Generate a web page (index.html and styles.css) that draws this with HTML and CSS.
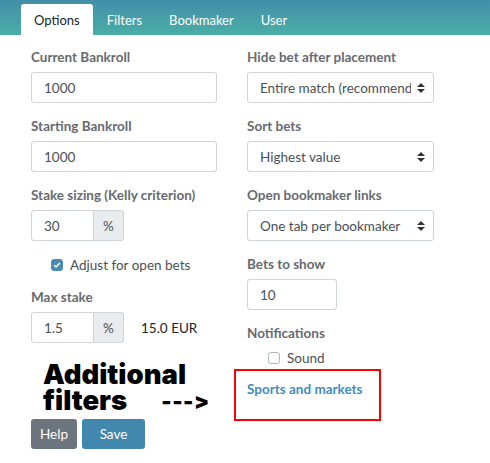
FILE: index.html
```html
<!DOCTYPE html>
<html>
<head>
<meta charset="utf-8">
<link rel="stylesheet" href="styles.css">
</head>
<body>
<div class="topbar">
  <div class="tab active">Options</div>
  <div class="tab">Filters</div>
  <div class="tab">Bookmaker</div>
  <div class="tab">User</div>
</div>
<div class="content">
  <div class="grid">
    <div class="col">
      <div class="group">
        <div class="label">Current Bankroll</div>
        <div class="input">1000</div>
      </div>
      <div class="group">
        <div class="label">Starting Bankroll</div>
        <div class="input">1000</div>
      </div>
      <div class="group">
        <div class="label">Stake sizing (Kelly criterion)</div>
        <div class="igroup">
          <div class="input short">30</div>
          <div class="addon">%</div>
        </div>
      </div>
      <div class="check checked-row">
        <span class="box checked"><svg width="8" height="8" viewBox="0 0 8 8"><path d="M1.2 4.2 L3.1 6 L6.8 2" fill="none" stroke="#fff" stroke-width="1.5"/></svg></span>
        <span>Adjust for open bets</span>
      </div>
      <div class="group">
        <div class="label">Max stake</div>
        <div class="row">
          <div class="igroup">
            <div class="input short">1.5</div>
            <div class="addon">%</div>
          </div>
          <span class="eur">15.0 EUR</span>
        </div>
      </div>
    </div>
    <div class="col">
      <div class="group">
        <div class="label">Hide bet after placement</div>
        <div class="input select"><span class="clip">Entire match (recommended)</span><svg class="arrows" width="8" height="10" viewBox="0 0 8 10"><path d="M4 0 L8 4 L0 4 Z M0 6 L8 6 L4 10 Z" fill="#333"/></svg></div>
      </div>
      <div class="group">
        <div class="label">Sort bets</div>
        <div class="input select"><span class="clip">Highest value</span><svg class="arrows" width="8" height="10" viewBox="0 0 8 10"><path d="M4 0 L8 4 L0 4 Z M0 6 L8 6 L4 10 Z" fill="#333"/></svg></div>
      </div>
      <div class="group">
        <div class="label">Open bookmaker links</div>
        <div class="input select"><span class="clip">One tab per bookmaker</span><svg class="arrows" width="8" height="10" viewBox="0 0 8 10"><path d="M4 0 L8 4 L0 4 Z M0 6 L8 6 L4 10 Z" fill="#333"/></svg></div>
      </div>
      <div class="group">
        <div class="label">Bets to show</div>
        <div class="input num">10</div>
      </div>
      <div class="label">Notifications</div>
      <div class="check sound">
        <span class="box"></span>
        <span>Sound</span>
      </div>
      <div class="linkwrap">
        <a class="link">Sports and markets</a>
        <div class="highlight"></div>
      </div>
    </div>
  </div>
  <div class="buttons">
    <button class="btn help">Help</button>
    <button class="btn save">Save</button>
  </div>
  <div class="annotation">Additional<br>filters<span class="arrow">---&gt;</span></div>
</div>
</body>
</html>
```
FILE: styles.css
```css
* { box-sizing: border-box; }
body {
  margin: 0;
  font-family: Lato, "Open Sans", sans-serif;
  font-size: 13.5px;
  color: #495057;
  background: #fff;
  width: 490px;
  height: 463px;
  overflow: hidden;
}
.topbar {
  height: 35px;
  background: linear-gradient(#438fa9, #49aea6);
  display: flex;
  align-items: flex-end;
  padding-left: 21px;
}
.tab {
  height: 31px;
  padding: 1px 13px 0;
  margin-right: 1px;
  color: #fff;
  display: flex;
  align-items: center;
  font-size: 13px;
}
.tab.active {
  background: #fff;
  color: #212529;
  border-radius: 3px 3px 0 0;
}
.content {
  position: relative;
  padding: 13px 31px 0 31px;
  height: 428px;
}
.grid {
  display: grid;
  grid-template-columns: 186px 187px;
  column-gap: 30px;
}
.group { margin-bottom: 14px; }
.label {
  font-weight: 700;
  color: #666b70;
  height: 20px;
  line-height: 18px;
  margin-bottom: 4px;
}
.input {
  height: 31px;
  border: 1px solid #ced4da;
  border-radius: 3px;
  padding: 0 12px;
  display: flex;
  align-items: center;
  color: #495057;
  background: #fff;
}
.select { justify-content: space-between; padding-right: 8px; }
.clip { white-space: nowrap; overflow: hidden; width: 151px; }
.arrows { flex: none; }
.num { width: 90px; }
.igroup { display: flex; width: 93px; }
.input.short { width: 63px; border-radius: 3px 0 0 3px; }
.addon {
  width: 30px;
  height: 31px;
  border: 1px solid #ced4da;
  border-left: none;
  border-radius: 0 3px 3px 0;
  background: #e9ecef;
  display: flex;
  align-items: center;
  justify-content: center;
}
.row { display: flex; align-items: center; }
.eur { margin-left: 17px; color: #212529; }
.check {
  display: flex;
  align-items: center;
  gap: 7px;
}
.checked-row { margin: 0 0 13px 20px; height: 20px; }
.box {
  width: 12px;
  height: 12px;
  border-radius: 3px;
  border: 1px solid #adb5bd;
  display: flex;
  align-items: center;
  justify-content: center;
  background: #fff;
}
.box.checked { background: #4a8bb0; border-color: #4a8bb0; }
.sound { margin: 0 0 0 21px; height: 20px; }
.linkwrap { position: relative; margin-top: 13px; height: 22px; }
.link { font-weight: 700; color: #3f8dba; }
.highlight {
  position: absolute;
  left: -13px;
  top: -12px;
  width: 147px;
  height: 52px;
  border: 2px solid #ff0000;
}
.buttons { display: flex; gap: 5px; margin-top: 16px; }
.btn {
  height: 30px;
  border: none;
  border-radius: 3px;
  color: #fff;
  font-family: inherit;
  font-size: 13.5px;
  padding: 0 8px;
}
.help { background: #6c757d; width: 46px; }
.save { background: #4287ad; width: 63px; }
.annotation {
  position: absolute;
  left: 43px;
  top: 326px;
  font-family: Inter, sans-serif;
  font-weight: 900;
  font-size: 27.5px;
  line-height: 26px;
  color: #000;
  font-variant-ligatures: none;
  font-feature-settings: "calt" 0, "liga" 0;
}
.arrow { font-size: 22px; margin-left: 34px; letter-spacing: 0.5px; vertical-align: 1px; }
```
